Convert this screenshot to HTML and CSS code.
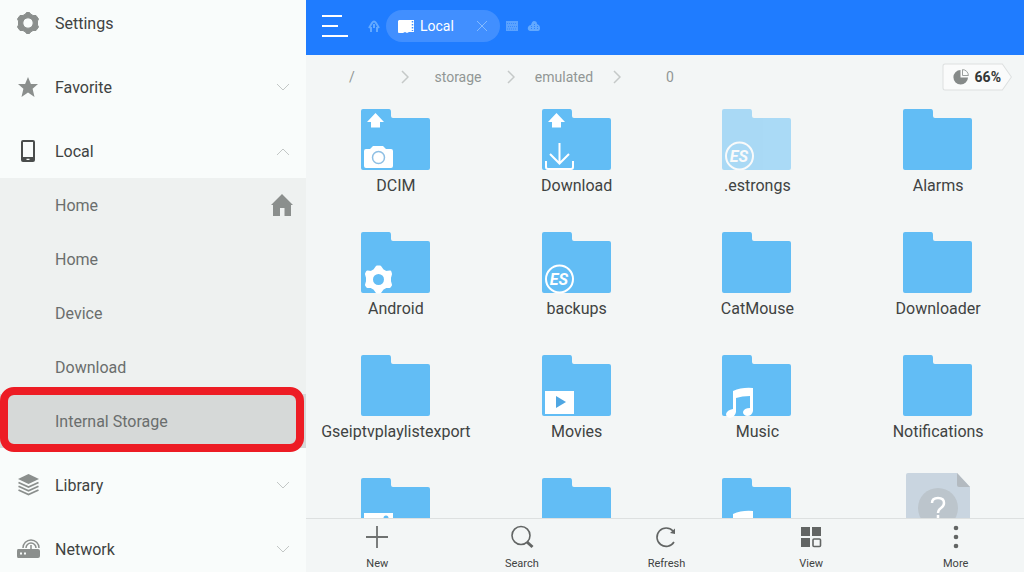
FILE: index.html
```html
<!DOCTYPE html>
<html lang="en">
<head>
<meta charset="utf-8">
<meta name="viewport" content="width=device-width, initial-scale=1">
<title>File Explorer</title>
<link rel="stylesheet" href="styles.css">
</head>
<body>
<svg class="defs" aria-hidden="true">
  <symbol id="folder" viewBox="0 0 70 62" overflow="visible">
    <path fill="currentColor" d="M2 0H28Q30 0 30 3V7Q30 9 32 9H67Q69 9 69 11V59Q69 61 67 61H2Q0 61 0 59V2Q0 0 2 0Z"/>
  </symbol>
  <symbol id="up" viewBox="0 0 70 62" overflow="visible">
    <path fill="#fff" d="M14.500 4L23 13H19V18.500H10V13H6Z"/>
  </symbol>
  <symbol id="notes" viewBox="0 0 70 62" overflow="visible">
    <path fill="#fff" fill-rule="evenodd" d="M11 36Q20 32 31 33V56Q30 61 25 61Q21 60 21 57Q22 53 28 53V41Q20 41 14 43V57Q13 62 8 63Q4 62 4 59Q5 55 11 54Z"/>
  </symbol>
  <symbol id="down" viewBox="0 0 14 9">
    <path d="M1 1L7 7L13 1" fill="none" stroke="currentColor" stroke-width="1"/>
  </symbol>
  <symbol id="right" viewBox="0 0 8 14">
    <path d="M1 1L7 7L1 13" fill="none" stroke="currentColor" stroke-width="1.500"/>
  </symbol>
</svg>

<div class="app">
  <nav class="sidebar" aria-label="Locations">
    <div class="menu">
      <button class="group">
        <svg class="group-icon" viewBox="0 0 24 24"><path fill="#8b8f8d" stroke="#8b8f8d" stroke-linejoin="round" fill-rule="evenodd" d="M9.500 3L10.500 1.500H13.500L14.500 3L17 4.500L20 4.500L22.500 8L21.500 10V14L22.500 16L20 19.500L17 19.500L14.500 21L13.500 22.500H10.500L9.500 21L7 19.500L4 19.500L1.500 16L2.500 14V10L1.500 8L4 4.500L7 4.500ZM12 6.800A5.200 5.200 0 1 0 12 17.200A5.200 5.200 0 1 0 12 6.800Z"/></svg>
        <span>Settings</span>
      </button>
      <button class="group">
        <svg class="group-icon" viewBox="0 0 24 24"><path fill="#8b8f8d" d="M12 2L14.900 9H22L16.600 13.700L18.500 22L12 17.600L5.500 22L7.400 13.700L2 9H9.100Z"/></svg>
        <span>Favorite</span>
        <svg class="arrow"><use href="#down"/></svg>
      </button>
      <div>
        <button class="group" aria-expanded="true">
          <svg class="group-icon" viewBox="0 0 24 24"><path fill="#4a4d4c" fill-rule="evenodd" d="M7 1H17Q19 1 19 3V21Q19 23 17 23H7Q5 23 5 21V3Q5 1 7 1ZM7 3V18H17V3ZM10.500 19.800V21H13.500V19.800Z"/></svg>
          <span>Local</span>
          <svg class="arrow arrow-up"><use href="#down"/></svg>
        </button>
        <div class="submenu">
          <button class="place"><span>Home</span>
            <svg class="home" viewBox="0 0 22 22"><path fill="#8b8f8d" d="M11 0L22 11H20V22H13.500V14H9V22H2V11H0Z"/></svg>
          </button>
          <button class="place">Home</button>
          <button class="place">Device</button>
          <button class="place">Download</button>
          <button class="place place-selected">Internal Storage</button>
        </div>
      </div>
      <button class="group">
        <svg class="group-icon" viewBox="0 0 24 24"><path fill="#8b8f8d" d="M12.500 1L23 6L12.500 11L2 6Z"/><path fill="none" stroke="#8b8f8d" stroke-width="1.800" d="M2.500 9.500L12.500 14L22.500 9.500M2.500 13.200L12.500 17.700L22.500 13.200M2.500 17L12.500 21.500L22.500 17"/></svg>
        <span>Library</span>
        <svg class="arrow"><use href="#down"/></svg>
      </button>
      <button class="group">
        <svg class="group-icon" viewBox="0 0 24 24"><path fill="#8b8f8d" fill-rule="evenodd" d="M2 12H22Q24 12 24 14V19Q24 21 22 21H2Q1 21 1 19V14Q1 12 2 12ZM4 15.500V17.500H6V15.500ZM8 15.500V17.500H10V15.500Z"/><path fill="none" stroke="#8b8f8d" stroke-width="1.500" d="M7 11A8 8 0 0 1 23 11M10 11A5 5 0 0 1 20 11M15 8V13"/></svg>
        <span>Network</span>
        <svg class="arrow"><use href="#down"/></svg>
      </button>
    </div>
  </nav>

  <main class="main">
    <header class="topbar">
      <button class="icon-button" aria-label="Menu">
        <svg width="28" height="22" viewBox="0 0 28 22"><path d="M1 1H21M1 11H17M1 21H27" stroke="#fff" stroke-width="2"/></svg>
      </button>
      <button class="icon-button tab-home" aria-label="Home">
        <svg width="12" height="14" viewBox="0 0 12 14"><path fill="none" stroke="#62a9ff" stroke-width="2" d="M1 9L4 4Q6 1 8 4L11 9M3 8V13M9 8V13M6 5V9"/></svg>
      </button>
      <div class="tab">
        <svg width="18" height="15" viewBox="0 0 18 15"><path fill="#fff" d="M2 1H17V13H12L10 14L8 13L6 14H2Q1 14 1 13V2Z"/><path d="M15.500 2V12" stroke="#418fff" stroke-width="1.500" stroke-dasharray="1.500 1.500"/></svg>
        <span>Local</span>
        <button class="icon-button tab-close" aria-label="Close tab">
          <svg width="12" height="12" viewBox="0 0 12 12"><path d="M1 1L11 11M11 1L1 11" stroke="#83baff"/></svg>
        </button>
      </div>
      <button class="icon-button tab-extra" aria-label="Library">
        <svg width="14" height="12" viewBox="0 0 14 12"><rect x="1" y="1" width="12" height="10" fill="#5aa2ff"/><path d="M2 3.500H12M3 6.500H12M2 9H12" stroke="#3589ff" stroke-dasharray="1 1"/></svg>
      </button>
      <button class="icon-button" aria-label="Cloud">
        <svg width="14" height="12" viewBox="0 0 14 12"><path fill="#62a9ff" d="M3 11Q0 10 1 7Q2 5 4 5Q5 1 7 1Q10 1 10 4Q13 5 13 8Q13 11 11 11Z"/><path d="M4.500 6V10M7.500 4V10M10.500 6V10" stroke="#2f86ff" stroke-dasharray="1 1"/></svg>
      </button>
    </header>

    <div class="path-row">
      <nav class="crumbs" aria-label="Path">
        <a class="crumb" href="#">/</a><svg class="crumb-sep"><use href="#right"/></svg>
        <a class="crumb" href="#">storage</a><svg class="crumb-sep"><use href="#right"/></svg>
        <a class="crumb" href="#">emulated</a><svg class="crumb-sep"><use href="#right"/></svg>
        <a class="crumb" href="#">0</a>
      </nav>
      <button class="usage">
        <svg class="usage-shape" viewBox="0 0 70 28" preserveAspectRatio="none"><path d="M3 1H60L69 14L60 27H3Q1 27 1 25V3Q1 1 3 1Z" fill="#fafbfb" stroke="#dde0e0"/></svg>
        <svg class="usage-pie" viewBox="0 0 16 16"><path fill="#868a89" d="M7.500 1V8.500H15A7.300 7.300 0 1 1 7.500 1Z"/><path fill="#fafbfb" stroke="#9b9f9e" d="M9.500 .6A6 6 0 0 1 15.400 6.500H9.500Z"/></svg>
        <span>66%</span>
      </button>
    </div>

    <section class="files" aria-label="Files">
      <button class="file">
        <svg class="file-icon" viewBox="0 0 70 62"><use href="#folder"/><use href="#up"/><path fill="#fff" d="M5 40H9L12 37H22L25 40H30Q32 40 32 42V57Q32 59 30 59H5Q3 59 3 57V42Q3 40 5 40Z"/><circle cx="17.500" cy="48.500" r="6" fill="none" stroke="#8ebfe4" stroke-width="1.500"/></svg>
        <span>DCIM</span>
      </button>
      <button class="file">
        <svg class="file-icon" viewBox="0 0 70 62"><use href="#folder"/><use href="#up"/><path fill="none" stroke="#fff" stroke-width="2" d="M17.500 34V54M8 45L17.500 54.500L27 45M4 52V58Q4 60 6 60H29Q31 60 31 58V52"/></svg>
        <span>Download</span>
      </button>
      <button class="file">
        <svg class="file-icon file-hidden" viewBox="0 0 70 62"><use href="#folder"/><circle cx="17.500" cy="47" r="13.500" fill="none" stroke="#fff" stroke-width="2"/><text x="17" y="53" text-anchor="middle" class="es-text">ES</text></svg>
        <span>.estrongs</span>
      </button>
      <button class="file">
        <svg class="file-icon" viewBox="0 0 70 62"><use href="#folder"/></svg>
        <span>Alarms</span>
      </button>
      <button class="file">
        <svg class="file-icon" viewBox="0 0 70 62"><use href="#folder"/><path fill="#fff" stroke="#fff" stroke-width="3" stroke-linejoin="round" d="M16 35H19L21.500 38.500L25 40.500L29 40L29.500 42L28.500 45.500V49.500L29.500 53L28.500 54.500L25 54.500L21.500 56.500L19 60H16L13.500 56.500L10 54.500L6.500 54.500L5.500 53L6.500 49.500V45.500L5.500 42L6.500 40L10 40.500L13.500 38.500Z"/><circle cx="17.500" cy="47.500" r="5.500" fill="currentColor"/></svg>
        <span>Android</span>
      </button>
      <button class="file">
        <svg class="file-icon" viewBox="0 0 70 62"><use href="#folder"/><circle cx="17.500" cy="47" r="13.500" fill="none" stroke="#fff" stroke-width="2"/><text x="17" y="53" text-anchor="middle" class="es-text">ES</text></svg>
        <span>backups</span>
      </button>
      <button class="file">
        <svg class="file-icon" viewBox="0 0 70 62"><use href="#folder"/></svg>
        <span>CatMouse</span>
      </button>
      <button class="file">
        <svg class="file-icon" viewBox="0 0 70 62"><use href="#folder"/></svg>
        <span>Downloader</span>
      </button>
      <button class="file">
        <svg class="file-icon" viewBox="0 0 70 62"><use href="#folder"/></svg>
        <span>Gseiptvplaylistexport</span>
      </button>
      <button class="file">
        <svg class="file-icon" viewBox="0 0 70 62"><use href="#folder"/><rect x="3" y="36" width="29" height="23" fill="#fff"/><path fill="#4fa6e2" d="M14 41L24 47L14 53Z"/></svg>
        <span>Movies</span>
      </button>
      <button class="file">
        <svg class="file-icon" viewBox="0 0 70 62"><use href="#folder"/><use href="#notes"/></svg>
        <span>Music</span>
      </button>
      <button class="file">
        <svg class="file-icon" viewBox="0 0 70 62"><use href="#folder"/></svg>
        <span>Notifications</span>
      </button>
      <button class="file" aria-label="Pictures folder">
        <svg class="file-icon" viewBox="0 0 70 62"><use href="#folder"/><rect x="3" y="35" width="29" height="23" fill="#fff"/><circle cx="25" cy="40" r="2.500" fill="currentColor"/></svg>
      </button>
      <button class="file" aria-label="Folder">
        <svg class="file-icon" viewBox="0 0 70 62"><use href="#folder"/></svg>
      </button>
      <button class="file" aria-label="Audio folder">
        <svg class="file-icon" viewBox="0 0 70 62"><use href="#folder"/><use href="#notes"/></svg>
      </button>
      <button class="file" aria-label="Unknown file">
        <svg class="file-icon" viewBox="0 0 70 62"><path fill="#c9d5e0" d="M5 -5H54L67 9V66H3V-3Q3 -5 5 -5Z"/><path fill="#b3bac0" d="M54 -5L67 9H56Q54 9 54 7Z"/><circle cx="35" cy="30" r="20" fill="#bcc5cc"/><path fill="none" stroke="#fff" stroke-width="2.500" d="M29 25Q29 20 35 20Q41 20 41 25Q41 28 38 30Q35 32 35 35M35 37V40"/></svg>
      </button>
    </section>

    <footer class="toolbar">
      <button class="tool"><svg viewBox="0 0 24 24"><path d="M12 1V23M1 12H23" stroke="#6e7170" stroke-width="1.800"/></svg><span>New</span></button>
      <button class="tool"><svg viewBox="0 0 24 24"><circle cx="11" cy="10.500" r="9" fill="none" stroke="#626564" stroke-width="1.600"/><path d="M17 17L22.500 22" stroke="#626564" stroke-width="3"/></svg><span>Search</span></button>
      <button class="tool"><svg viewBox="0 0 24 24"><path fill="none" stroke="#626564" stroke-width="1.600" d="M20 17A9.200 9.200 0 1 1 19 6"/><path fill="#626564" d="M16 8L21 3.500V9Z"/></svg><span>Refresh</span></button>
      <button class="tool"><svg viewBox="0 0 24 24"><path fill="#626564" d="M2 2H11V11H2ZM13 2H22V11H13ZM2 13H11V22H2Z"/><rect x="14" y="14" width="7.500" height="7.500" rx="1" fill="none" stroke="#626564" stroke-width="1.600"/></svg><span>View</span></button>
      <button class="tool"><svg viewBox="0 0 24 24"><g fill="#626564"><circle cx="12" cy="3" r="2.300"/><circle cx="12" cy="12" r="2.300"/><circle cx="12" cy="21" r="2.300"/></g></svg><span>More</span></button>
    </footer>
  </main>
</div>
</body>
</html>
```
FILE: styles.css
```css
* { box-sizing: border-box; }

body {
  margin: 0;
  font-family: Roboto, "Noto Sans", sans-serif;
  font-size: 16px;
  color: #3f4342;
}

button {
  margin: 0;
  padding: 0;
  border: 0;
  background: none;
  font: inherit;
  color: inherit;
}

svg { display: block; flex: none; }

.defs { position: absolute; width: 0; height: 0; }

.app {
  display: flex;
  height: 100vh;
  overflow: hidden;
  background: #f3f6f6;
}

.sidebar {
  flex: none;
  width: 306px;
  overflow: hidden;
  background: #f9fcfb;
}

.menu {
  display: flex;
  flex-direction: column;
  gap: 10px;
  margin-top: -4px;
}

.group {
  display: flex;
  align-items: center;
  gap: 15px;
  width: 100%;
  height: 54px;
  padding: 0 16px;
  text-align: left;
}

.group-icon { width: 24px; height: 24px; }

.arrow {
  width: 14px;
  height: 9px;
  margin-left: auto;
  color: #c3c7c6;
}

.arrow-up { transform: rotate(180deg); }

.submenu { background: #eef1f0; }

.place {
  position: relative;
  display: flex;
  align-items: center;
  justify-content: space-between;
  width: 100%;
  height: 54px;
  padding: 0 13px 0 55px;
  color: #6a6e6d;
}

.home { width: 22px; height: 22px; }

.place-selected { background: #d6d9d8; }

.place-selected::after {
  content: "";
  position: absolute;
  inset: -7px 2px -4px 0;
  border: 8px solid #ed1c24;
  border-radius: 14px;
}

.main {
  display: flex;
  flex: 1;
  flex-direction: column;
  min-width: 0;
}

.topbar {
  display: flex;
  flex: none;
  align-items: center;
  height: 55px;
  padding: 0 15px 3px;
  background: #1f7cff;
}

.tab-home { margin: 0 6px 0 19px; }

.tab {
  display: flex;
  align-items: center;
  gap: 5px;
  height: 32px;
  padding: 0 12px 0 11px;
  border-radius: 16px;
  background: #418fff;
  color: #fff;
  font-size: 14px;
}

.tab-close { margin-left: 17px; }

.tab-extra { margin: 0 8px 0 5px; }

.path-row {
  display: flex;
  flex: none;
  align-items: center;
  justify-content: space-between;
  height: 43px;
  padding: 0 12px 0 6px;
}

.crumbs { display: flex; align-items: center; }

.crumb {
  width: 80px;
  color: #919695;
  font-size: 14px;
  text-align: center;
  text-decoration: none;
}

.crumb-sep {
  width: 8px;
  height: 14px;
  margin: 0 9px;
  color: #c5c9c8;
}

.usage {
  position: relative;
  display: flex;
  align-items: center;
  gap: 6px;
  height: 28px;
  padding: 0 11px;
  font-size: 14px;
  font-weight: 700;
  color: #333736;
}

.usage-shape {
  position: absolute;
  inset: 0;
  width: 100%;
  height: 100%;
}

.usage-pie { position: relative; width: 16px; height: 16px; }

.usage span { position: relative; }

.files {
  display: grid;
  flex: 1;
  grid-template-columns: repeat(4, 1fr);
  grid-auto-rows: 87px;
  gap: 36px 11px;
  min-height: 0;
  padding: 11px 1px 0 5px;
  overflow: hidden;
}

.file {
  display: flex;
  flex-direction: column;
  align-items: center;
  gap: 5px;
  line-height: 20px;
}

.file-icon {
  width: 70px;
  height: 62px;
  overflow: visible;
  color: #62bdf5;
}

.file-hidden { opacity: 0.5; }

.es-text {
  fill: #fff;
  font-size: 16px;
  font-style: italic;
  font-weight: 700;
}

.toolbar {
  display: grid;
  flex: none;
  grid-template-columns: repeat(5, 1fr);
  gap: 8px;
  height: 54px;
  padding: 6px 0 0 3px;
  border-top: 1px solid #dde0e0;
}

.tool {
  display: flex;
  flex-direction: column;
  align-items: center;
  gap: 8px;
  font-size: 11px;
  line-height: 14px;
}

.tool svg { width: 24px; height: 24px; }
```
